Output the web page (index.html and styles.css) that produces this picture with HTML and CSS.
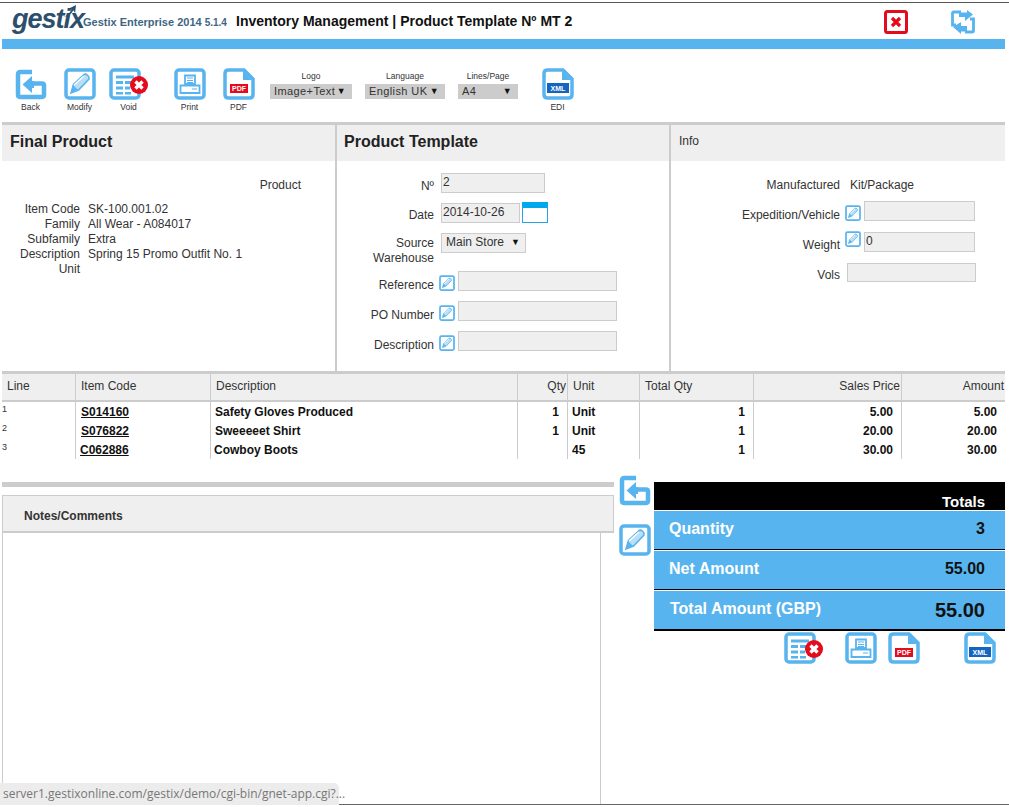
FILE: index.html
```html
<!DOCTYPE html>
<html lang="en">
<head>
<meta charset="utf-8">
<title>Gestix Product Template</title>
<link rel="stylesheet" href="styles.css">
</head>
<body>
<svg class="defs" width="0" height="0" aria-hidden="true">
  <symbol id="i-back" viewBox="0 0 32 32">
    <path d="M17 4H5.500Q3 4 3 6.500V26.500Q3 29 5.500 29H26.500Q29 29 29 26.500V17.500Q29 15.500 27 15.500H16" class="ln" stroke-width="4.500"/>
    <path d="M7.500 16.500L17 8V13H19V20H17V25Z" class="fl"/>
  </symbol>
  <symbol id="i-edit" viewBox="0 0 32 32">
    <rect x="2" y="2" width="28" height="28" rx="3" class="ln" stroke-width="3.500"/>
    <path d="M7 25L9.500 16.500L20 6.500C22 5 26 8.500 25 11L14.500 22Z" fill="#b9dff7" stroke="#58b4ee" stroke-width="1.600"/>
    <path d="M7 25L9.500 17.500L14 22Z" class="fl"/>
    <path d="M10 17L20 8" stroke="#fff" stroke-width="1.500"/>
  </symbol>
  <symbol id="i-void" viewBox="0 0 39 32">
    <rect x="2" y="2" width="28" height="28" rx="3" class="ln" stroke-width="3.500"/>
    <path d="M7 7.500H25V10.500H7ZM7 13H14V16H7ZM16 13H22V16H16ZM7 18.500H14V21.500H7ZM16 18.500H21V21.500H16ZM7 24H14V26.500H7ZM16 24H22V26.500H16Z" class="fl"/>
    <circle cx="30" cy="17" r="9" fill="#e30b1c"/>
    <path d="M26.500 13.500L33.500 20.500M33.500 13.500L26.500 20.500" stroke="#fff" stroke-width="3.400"/>
  </symbol>
  <symbol id="i-print" viewBox="0 0 32 32">
    <rect x="2" y="2" width="28" height="28" rx="3" class="ln" stroke-width="3.500"/>
    <path d="M11 7.500H21V16H11ZM6.500 17.500H25.500V25H6.500Z" class="ln" stroke-width="1.800"/>
    <path d="M13 10H19M13 12.500H19M13 14.500H19M18 21H23" class="ln" stroke-width="1.200"/>
  </symbol>
  <symbol id="i-pdf" viewBox="0 0 32 32">
    <path d="M5.500 2H21L30 11V26.500Q30 30 26.500 30H5.500Q2 30 2 26.500V5.500Q2 2 5.500 2Z" class="ln" stroke-width="3.500"/>
    <path d="M20 3V12H29Z" class="fl"/>
    <rect x="7" y="16" width="18" height="9" fill="#e30b1c"/>
    <text x="16" y="23.200" class="doc-text">PDF</text>
  </symbol>
  <symbol id="i-xml" viewBox="0 0 32 32">
    <path d="M5.500 2H21L30 11V26.500Q30 30 26.500 30H5.500Q2 30 2 26.500V5.500Q2 2 5.500 2Z" class="ln" stroke-width="3.500"/>
    <path d="M20 3V12H29Z" class="fl"/>
    <rect x="5" y="15" width="22" height="10" fill="#1565c0"/>
    <text x="16" y="23.200" class="doc-text">XML</text>
  </symbol>
  <symbol id="i-close" viewBox="0 0 24 24">
    <rect x="1.500" y="1.500" width="21" height="21" rx="2" fill="#fff" stroke="#e30b1c" stroke-width="3"/>
    <path d="M8 8L16 16M16 8L8 16" stroke="#e30b1c" stroke-width="3.200"/>
  </symbol>
  <symbol id="i-refresh" viewBox="0 0 24 24">
    <path d="M10 2H3Q1.500 2 1.500 3.500V15H5M14 22H21Q22.500 22 22.500 20.500V9H19" class="ln" stroke-width="2.800"/>
    <path d="M8 2.500H16V0L22 4.500L14 11V7H8ZM16 21.500H10V24L2 17L10 12V16H16Z" class="fl"/>
  </symbol>
</svg>

<div class="page">
  <header class="head">
    <div class="logo">gestix<svg class="logo-arrow" viewBox="0 0 16 16"><path d="M1 14C6 12 9 9 11 5L8 4L16 0L15 9L13 6C11 10 7 13 1 14Z" fill="#2c4f6e"/></svg></div>
    <div class="product">Gestix Enterprise 2014 <span class="version">5.1.4</span></div>
    <h1 class="doc-title">Inventory Management | Product Template Nº MT 2</h1>
    <svg class="act-close"><use href="#i-close"/></svg>
    <svg class="act-refresh"><use href="#i-refresh"/></svg>
  </header>
  <div class="rule"></div>

  <nav class="toolbar">
    <div class="tool"><svg class="ico"><use href="#i-back"/></svg><span>Back</span></div>
    <div class="tool"><svg class="ico"><use href="#i-edit"/></svg><span>Modify</span></div>
    <div class="tool"><svg class="ico-wide"><use href="#i-void"/></svg><span>Void</span></div>
    <div class="tool tool-print"><svg class="ico"><use href="#i-print"/></svg><span>Print</span></div>
    <div class="tool"><svg class="ico"><use href="#i-pdf"/></svg><span>PDF</span></div>
    <div class="pick pick-logo"><label>Logo</label><div class="pick-box">Image+Text<b>▼</b></div></div>
    <div class="pick pick-lang"><label>Language</label><div class="pick-box">English UK<b>▼</b></div></div>
    <div class="pick pick-lines"><label>Lines/Page</label><div class="pick-box">A4<b>▼</b></div></div>
    <div class="tool tool-edi"><svg class="ico"><use href="#i-xml"/></svg><span>EDI</span></div>
  </nav>

  <section class="panels">
    <div class="panel">
      <h2 class="panel-head">Final Product</h2>
      <div class="final-body">
        <div class="final-type">Product</div>
        <dl class="facts">
          <dt>Item Code</dt><dd>SK-100.001.02</dd>
          <dt>Family</dt><dd>All Wear - A084017</dd>
          <dt>Subfamily</dt><dd>Extra</dd>
          <dt>Description</dt><dd>Spring 15 Promo Outfit No. 1</dd>
          <dt>Unit</dt><dd></dd>
        </dl>
      </div>
    </div>

    <div class="panel panel-mid">
      <h2 class="panel-head">Product Template</h2>
      <div class="form">
        <div class="row"><div class="lbl lbl-a">Nº</div><div class="inp inp-no">2</div></div>
        <div class="row"><div class="lbl lbl-b">Date</div><div class="inp inp-date">2014-10-26</div><div class="cal"></div></div>
        <div class="row row-tall"><div class="lbl lbl-c">Source Warehouse</div><div class="inp inp-store">Main Store<b>▼</b></div></div>
        <div class="row"><div class="lbl lbl-d">Reference</div><svg class="mini"><use href="#i-edit"/></svg><div class="inp inp-long"></div></div>
        <div class="row"><div class="lbl lbl-d">PO Number</div><svg class="mini"><use href="#i-edit"/></svg><div class="inp inp-long"></div></div>
        <div class="row"><div class="lbl lbl-d">Description</div><svg class="mini"><use href="#i-edit"/></svg><div class="inp inp-long"></div></div>
      </div>
    </div>

    <div class="panel panel-info">
      <h2 class="panel-head panel-head-sm">Info</h2>
      <div class="info">
        <div class="irow irow-top"><div class="ilbl">Manufactured</div><div class="ival">Kit/Package</div></div>
        <div class="irow irow-exp"><div class="ilbl">Expedition/Vehicle</div><svg class="mini mini-exp"><use href="#i-edit"/></svg><div class="inp inp-info"></div></div>
        <div class="irow irow-wgt"><div class="ilbl">Weight</div><svg class="mini mini-wgt"><use href="#i-edit"/></svg><div class="inp inp-info">0</div></div>
        <div class="irow irow-vol"><div class="ilbl">Vols</div><div class="inp inp-vols"></div></div>
      </div>
    </div>
  </section>

  <table class="lines">
    <colgroup>
      <col class="c1"><col class="c2"><col class="c3"><col class="c4"><col class="c5"><col class="c6"><col class="c7"><col class="c8">
    </colgroup>
    <thead>
      <tr><th>Line</th><th>Item Code</th><th>Description</th><th class="r">Qty</th><th>Unit</th><th>Total Qty</th><th class="r">Sales Price</th><th class="r">Amount</th></tr>
    </thead>
    <tbody>
      <tr><td class="no">1</td><td class="code"><u>S014160</u></td><td class="desc">Safety Gloves Produced</td><td class="num">1</td><td class="unit">Unit</td><td class="num">1</td><td class="num">5.00</td><td class="num">5.00</td></tr>
      <tr><td class="no">2</td><td class="code"><u>S076822</u></td><td class="desc">Sweeeeet Shirt</td><td class="num">1</td><td class="unit">Unit</td><td class="num">1</td><td class="num">20.00</td><td class="num">20.00</td></tr>
      <tr><td class="no">3</td><td class="code nudge"><u>C062886</u></td><td class="desc nudge">Cowboy Boots</td><td class="num"></td><td class="unit">45</td><td class="num">1</td><td class="num">30.00</td><td class="num">30.00</td></tr>
    </tbody>
  </table>

  <section class="bottom">
    <div class="notes">
      <div class="notes-rule"></div>
      <div class="notes-head">Notes/Comments</div>
      <div class="notes-area"></div>
    </div>
    <div class="side-acts">
      <svg class="ico"><use href="#i-back"/></svg>
      <svg class="ico"><use href="#i-edit"/></svg>
    </div>
    <div class="sum">
      <div class="sum-head">Totals</div>
      <div class="sum-row"><span class="k">Quantity</span><span class="v">3</span></div>
      <div class="sum-row"><span class="k">Net Amount</span><span class="v">55.00</span></div>
      <div class="sum-row sum-total"><span class="k">Total Amount (GBP)</span><span class="v">55.00</span></div>
      <div class="sum-acts">
        <svg class="ico-wide"><use href="#i-void"/></svg>
        <svg class="ico"><use href="#i-print"/></svg>
        <svg class="ico"><use href="#i-pdf"/></svg>
        <svg class="ico"><use href="#i-xml"/></svg>
      </div>
    </div>
  </section>
</div>
<div class="status">server1.gestixonline.com/gestix/demo/cgi-bin/gnet-app.cgi?...</div>
</body>
</html>
```

FILE: styles.css
```css
* { box-sizing: border-box; }
html, body { margin: 0; padding: 0; height: 807px; overflow: hidden; background: #fff; }
body { font: 12px/15px "Liberation Sans", Arial, sans-serif; color: #333; position: relative; }
.defs { position: absolute; }
.ln { fill: none; stroke: #58b4ee; }
.fl { fill: #58b4ee; }
.doc-text { font: bold 7px "Liberation Sans", sans-serif; fill: #fff; text-anchor: middle; }

.page { margin-top: 2px; height: 803px; border-top: 1px solid #555; border-bottom: 1px solid #666; padding: 0 4px 0 2px; overflow: hidden; }

.head { height: 36px; display: flex; align-items: center; position: relative; }
.logo { position: relative; width: 81px; padding-left: 10px; font: italic bold 27px/30px "Liberation Sans", sans-serif; color: #2c4f6e; letter-spacing: -1px; margin-top: -4px; }
.logo-arrow { position: absolute; left: 60px; top: 1px; width: 14px; height: 14px; }
.product { width: 153px; font-weight: bold; font-size: 11px; color: #3e6682; margin-top: 3px; white-space: nowrap; }
.version { font-size: 10px; }
.doc-title { margin: 0; font-size: 14px; font-weight: bold; color: #111; white-space: nowrap; }
.act-close { position: absolute; left: 882px; top: 7px; width: 24px; height: 24px; }
.act-refresh { position: absolute; left: 949px; top: 7px; width: 24px; height: 24px; }
.rule { height: 10px; background: #58b4ee; }

.toolbar { height: 73px; display: flex; align-items: flex-start; padding: 19px 0 0 4px; }
.tool { width: 49px; display: flex; flex-direction: column; align-items: center; font-size: 8.500px; line-height: 10px; color: #333; }
.tool span { margin-top: 2px; }
.tool-print { margin-left: 12px; }
.tool-edi { margin-left: 15px; }
.ico { width: 32px; height: 32px; display: block; flex: none; }
.ico-wide { width: 39px; height: 32px; display: block; flex: none; }

.pick { font-size: 8.500px; line-height: 10px; text-align: center; color: #333; margin-top: 3px; }
.pick label { display: block; height: 13px; }
.pick-logo { width: 82px; margin-left: 7px; }
.pick-lang { width: 80px; margin-left: 13px; }
.pick-lines { width: 60px; margin-left: 13px; }
.pick-box { height: 15px; background: #ccc; display: flex; justify-content: space-between; padding: 0 6px 0 4px; font-size: 11px; line-height: 15px; letter-spacing: .4px; color: #333; white-space: nowrap; }
.pick-box b, .inp-store b { font-size: 9px; font-weight: normal; color: #111; }

.panels { display: grid; grid-template-columns: 333px 334px 336px; height: 249px; border-top: 3px solid #ccc; }
.panel-mid, .panel-info { border-left: 2px solid #ccc; }
.panel-mid { padding-left: 0; }
.panel-head { margin: 0; height: 36px; background: #efefef; font-size: 16px; line-height: 34px; font-weight: bold; color: #222; padding-left: 8px; }
.panel-mid .panel-head { padding-left: 7px; }
.panel-head-sm { font-size: 12px; font-weight: normal; line-height: 32px; color: #333; }

.final-body { padding-top: 17px; }
.final-type { width: 299px; text-align: right; }
.facts { margin: 9px 0 0; display: grid; grid-template-columns: 78px 1fr; column-gap: 8px; }
.facts dt { text-align: right; height: 15px; }
.facts dd { margin: 0; height: 15px; }

.form { padding-top: 12px; }
.row { display: flex; align-items: flex-start; height: 30px; }
.row-tall { height: 38px; }
.lbl { width: 97px; text-align: right; flex: none; }
.lbl-a { padding-top: 6px; }
.lbl-b { padding-top: 5px; }
.lbl-c { padding: 3px 0 0 25px; }
.lbl-d { padding-top: 7px; }
.inp { height: 20px; background: #efefef; border: 1px solid #ccc; line-height: 15px; padding: 1px 0 0 1px; color: #333; flex: none; }
.inp-no { width: 104px; margin-left: 7px; }
.inp-date { width: 79px; margin-left: 7px; }
.cal { width: 26px; height: 21px; margin: -1px 0 0 2px; border: 1px solid #25a4e4; border-top: 6px solid #00a9ec; background: #fff; flex: none; }
.inp-store { width: 85px; margin-left: 7px; display: flex; justify-content: space-between; padding: 1px 5px 0 4px; }
.mini { width: 16px; height: 16px; flex: none; }
.form .mini { margin: 4px 0 0 5px; }
.inp-long { width: 159px; margin-left: 3px; }

.info { padding-top: 12px; }
.irow { display: flex; align-items: flex-start; }
.ilbl { width: 169px; text-align: right; flex: none; }
.ival { margin-left: 10px; }
.irow-top { height: 28px; padding-top: 5px; }
.irow-exp { height: 31px; }
.irow-exp .ilbl { padding-top: 7px; }
.mini-exp { margin: 4px 0 0 5px; }
.irow-wgt { height: 31px; }
.irow-wgt .ilbl { padding-top: 6px; }
.mini-wgt { margin: -1px 0 0 5px; }
.inp-info { width: 111px; margin-left: 3px; }
.irow-vol .ilbl { padding-top: 5px; }
.inp-vols { width: 129px; height: 19px; margin-left: 7px; }

.lines { width: 1003px; table-layout: fixed; border-collapse: separate; border-spacing: 0; border-top: 3px solid #ccc; }
.c1 { width: 73px; } .c2 { width: 135px; } .c3 { width: 307px; } .c4 { width: 50px; }
.c5 { width: 72px; } .c6 { width: 114px; } .c7 { width: 148px; } .c8 { width: 104px; }
.lines th { height: 28px; background: #efefef; border-bottom: 2px solid #ccc; border-left: 1px solid #ccc; font-weight: normal; text-align: left; padding: 0 0 2px 5px; color: #333; }
.lines th:first-child { border-left: 0; }
.lines th.r { text-align: right; padding: 0 1px 2px 0; }
.lines td { height: 19px; padding: 1px 0 0; border-left: 1px solid #ccc; font-weight: bold; color: #111; white-space: nowrap; }
.lines td:first-child { border-left: 0; }
.lines .no { font-size: 9px; font-weight: normal; vertical-align: top; padding: 2px 0 0 0; color: #333; line-height: 11px; }
.lines .code { padding-left: 5px; }
.lines .code.nudge { padding-left: 4px; }
.lines .desc { padding-left: 4px; }
.lines .desc.nudge { padding-left: 3px; }
.lines .num { text-align: right; padding-right: 8px; }
.lines .unit { padding-left: 4px; }

.bottom { display: grid; grid-template-columns: 612px 40px 351px; padding-top: 15px; }
.notes { padding-top: 8px; }
.notes-rule { height: 5px; background: #ccc; }
.notes-head { height: 38px; margin-top: 8px; background: #efefef; border: 1px solid #ccc; border-bottom-width: 2px; padding: 13px 0 0 21px; font-weight: bold; color: #333; }
.notes-area { height: 280px; width: 599px; border: 1px solid #ccc; border-top: 0; }
.side-acts { padding-left: 5px; display: flex; flex-direction: column; gap: 18px; }
.sum { padding-top: 8px; }
.sum-head { height: 28px; background: #000; color: #fff; font-size: 15px; font-weight: bold; text-align: right; padding: 11px 20px 0 0; line-height: 17px; }
.sum-row { height: 40px; background: #58b4ee; border-top: 1px solid #fff; border-bottom: 1px solid #000; display: flex; justify-content: space-between; align-items: center; padding: 0 20px 4px 15px; font-weight: bold; font-size: 16px; }
.sum-row .k { color: #fff; }
.sum-row .v { color: #111; }
.sum-total { height: 41px; border-bottom-width: 2px; padding-left: 16px; }
.sum-total .v { font-size: 20px; padding-top: 4px; }
.sum-acts { display: flex; margin: 1px 0 0 130px; }
.sum-acts .ico:nth-child(2) { margin-left: 22px; }
.sum-acts .ico:nth-child(3) { margin-left: 11px; }
.sum-acts .ico:nth-child(4) { margin-left: 44px; }

.status { position: absolute; left: 0; top: 783px; width: 339px; height: 22px; background: #ececec; border-top-right-radius: 5px; font: 12px/22px "Open Sans", sans-serif; color: #777; padding-left: 3px; white-space: nowrap; }
```
